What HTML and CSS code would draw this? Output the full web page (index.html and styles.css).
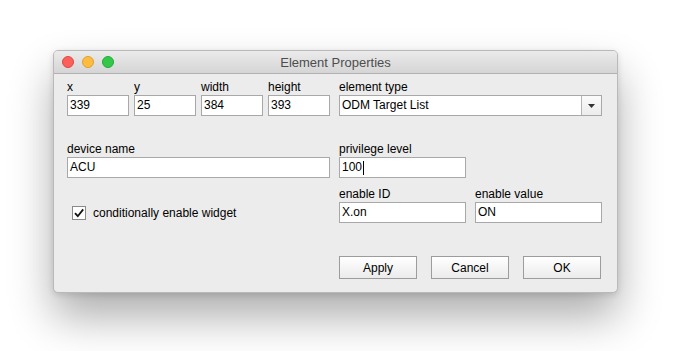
FILE: index.html
```html
<!DOCTYPE html>
<html lang="en">
<head>
    <meta charset="UTF-8">
    <title>Element Properties</title>
    <link rel="stylesheet" href="styles.css">
</head>
<body>
    <div class="window">
        <div class="titlebar">
            <div class="lights">
                <span class="light red"></span>
                <span class="light yellow"></span>
                <span class="light green"></span>
            </div>
            <div class="title">Element Properties</div>
        </div>
        <div class="content">
            <div class="row first">
                <div class="half quad">
                    <div class="field"><label>x</label><div class="input">339</div></div>
                    <div class="field"><label>y</label><div class="input">25</div></div>
                    <div class="field"><label>width</label><div class="input">384</div></div>
                    <div class="field"><label>height</label><div class="input">393</div></div>
                </div>
                <div class="half">
                    <div class="field">
                        <label>element type</label>
                        <div class="input select">
                            <span class="value">ODM Target List</span>
                            <span class="arrow"><svg width="7" height="4" viewBox="0 0 7 4"><path d="M0 0H7L3.5 4Z" fill="#333"/></svg></span>
                        </div>
                    </div>
                </div>
            </div>
            <div class="row second">
                <div class="half">
                    <div class="field"><label>device name</label><div class="input">ACU</div></div>
                </div>
                <div class="half">
                    <div class="field narrow"><label>privilege level</label><div class="input">100<span class="caret"></span></div></div>
                </div>
            </div>
            <div class="row third">
                <div class="half check-cell">
                    <div class="check-line">
                        <span class="checkbox"><svg width="12" height="12" viewBox="0 0 12 12"><path d="M2 6.2L4.8 9.2L10.2 2.4" fill="none" stroke="#111" stroke-width="1.8"/></svg></span>
                        <span>conditionally enable widget</span>
                    </div>
                </div>
                <div class="half pair">
                    <div class="field"><label>enable ID</label><div class="input">X.on</div></div>
                    <div class="field"><label>enable value</label><div class="input">ON</div></div>
                </div>
            </div>
            <div class="buttons">
                <button>Apply</button>
                <button>Cancel</button>
                <button>OK</button>
            </div>
        </div>
    </div>
</body>
</html>
```

FILE: styles.css
```css
html, body {
    margin: 0;
    padding: 0;
    background-color: #ffffff;
    font-family: "Liberation Sans", Arial, sans-serif;
    font-size: 12px;
    color: #000;
}
body {
    padding: 50px 0 0 53px;
    height: 351px;
    box-sizing: border-box;
}
.window {
    width: 565px;
    height: 243px;
    box-sizing: border-box;
    background-color: #ececec;
    border: 1px solid #b9b9b9;
    border-radius: 5px;
    box-shadow: 0 24px 44px rgba(0, 0, 0, 0.32), 0 2px 6px rgba(0, 0, 0, 0.12);
    display: flex;
    flex-direction: column;
    overflow: hidden;
}
.titlebar {
    height: 22px;
    flex: none;
    display: flex;
    align-items: center;
    position: relative;
    background: linear-gradient(#ebebeb, #d5d5d5);
    border-bottom: 1px solid #b1b1b1;
}
.lights {
    display: flex;
    gap: 8px;
    padding-left: 8px;
}
.light {
    width: 12px;
    height: 12px;
    border-radius: 50%;
    box-sizing: border-box;
}
.red { background: #fc605b; border: 1px solid #de4a44; }
.yellow { background: #fdbc40; border: 1px solid #dea033; }
.green { background: #34c84a; border: 1px solid #27aa35; }
.title {
    position: absolute;
    left: 0;
    right: 0;
    text-align: center;
    font-size: 13px;
    color: #4d4d4d;
    pointer-events: none;
}
.content {
    padding: 6px 15px 0 13px;
    display: flex;
    flex-direction: column;
}
.row {
    display: flex;
    gap: 9px;
}
.row.second { margin-top: 26px; }
.row.third { margin-top: 9px; }
.half {
    width: 263px;
    display: flex;
}
.quad { gap: 5px; }
.pair { gap: 9px; }
.field {
    display: flex;
    flex-direction: column;
    flex: 1;
}
.field.narrow { flex: none; width: 127px; }
.field label {
    line-height: 14px;
    margin-bottom: 1px;
    color: #000;
}
.input {
    height: 21px;
    box-sizing: border-box;
    border: 1px solid #a8a8a8;
    background: #fff;
    padding-left: 2px;
    line-height: 19px;
    display: flex;
    align-items: center;
}
.caret {
    display: inline-block;
    width: 1px;
    height: 14px;
    background: #000;
    margin-left: 1px;
}
.select { padding-right: 0; }
.select .value { flex: 1; }
.select .arrow {
    width: 19px;
    height: 19px;
    border-left: 1px solid #b5b5b5;
    background: linear-gradient(#fbfbfb, #ececec);
    display: flex;
    align-items: center;
    justify-content: center;
}
.check-cell {
    padding-top: 15px;
}
.check-line {
    height: 21px;
    display: flex;
    align-items: center;
    gap: 7px;
    padding-left: 5px;
}
.checkbox {
    width: 14px;
    height: 14px;
    box-sizing: border-box;
    border: 1px solid #8a8a8a;
    background: #fff;
    display: flex;
    align-items: center;
    justify-content: center;
}
.buttons {
    display: flex;
    justify-content: flex-end;
    gap: 14px;
    margin-top: 33px;
    padding-right: 1px;
}
.buttons button {
    width: 78px;
    height: 23px;
    border: 1px solid #9c9c9c;
    border-radius: 0;
    background: linear-gradient(#ffffff, #ebebeb);
    font-family: "Liberation Sans", Arial, sans-serif;
    font-size: 12px;
    color: #000;
    padding: 0;
}
```
